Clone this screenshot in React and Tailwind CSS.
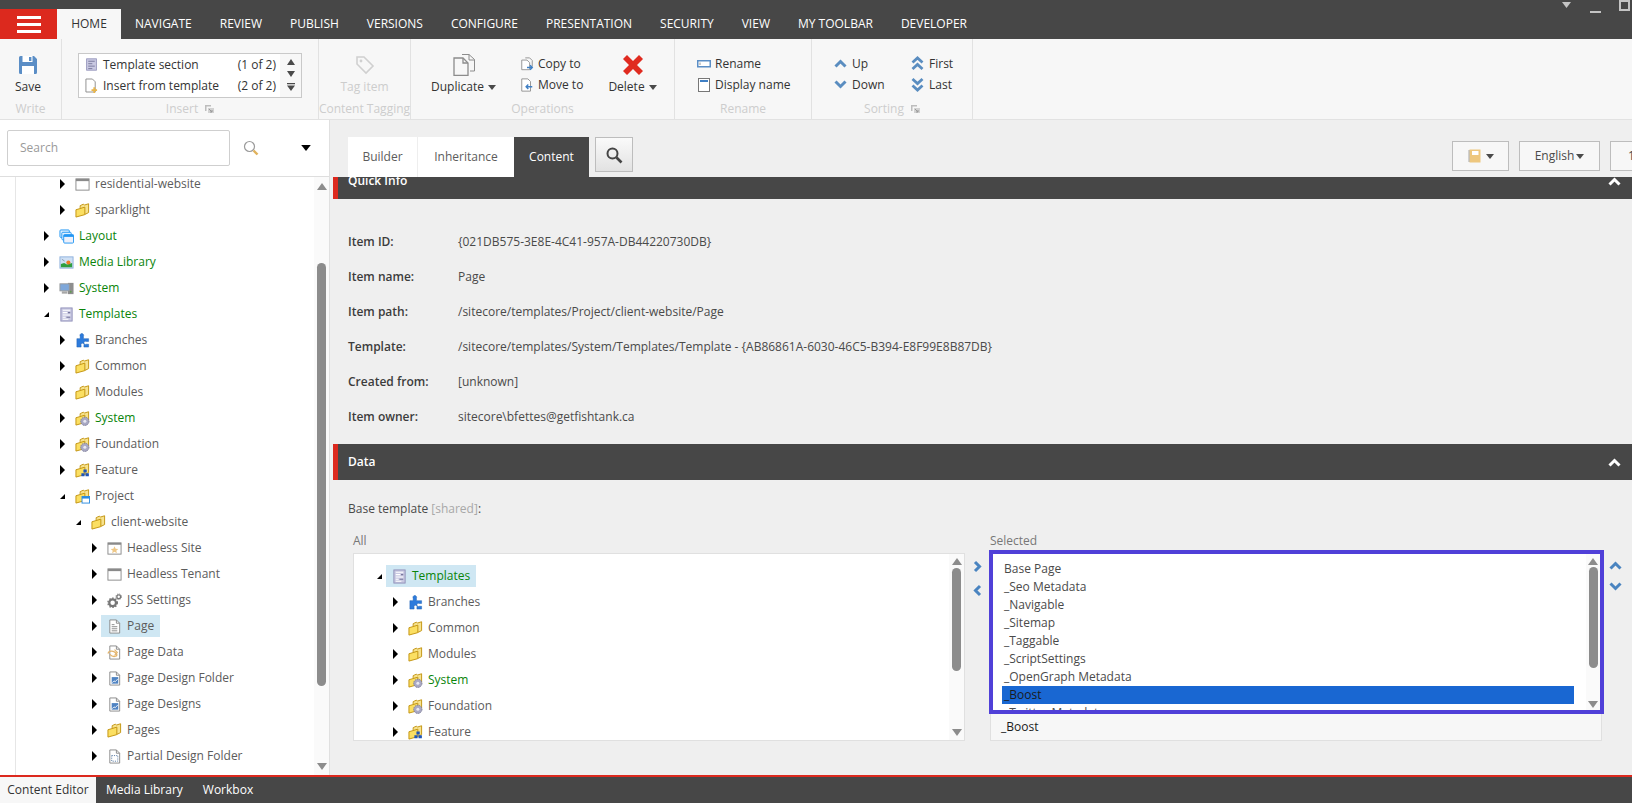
import React from 'react';

const tabs = ['NAVIGATE', 'REVIEW', 'PUBLISH', 'VERSIONS', 'CONFIGURE', 'PRESENTATION', 'SECURITY', 'VIEW', 'MY TOOLBAR', 'DEVELOPER'];

const Caret = ({ className = '' }) => (
  <svg viewBox="0 0 8 5" className={`w-[8px] h-[5px] shrink-0 ${className}`}>
    <polygon points="0,0 8,0 4,5" fill="currentColor" />
  </svg>
);

const ChevronUp = ({ className = '' }) => (
  <svg viewBox="0 0 13 9" className={`w-[13px] h-[9px] shrink-0 ${className}`}>
    <polyline points="1.5,7.5 6.5,2.5 11.5,7.5" fill="none" stroke="currentColor" strokeWidth="3" />
  </svg>
);

const ChevronDown = ({ className = '' }) => (
  <svg viewBox="0 0 13 9" className={`w-[13px] h-[9px] shrink-0 ${className}`}>
    <polyline points="1.5,1.5 6.5,6.5 11.5,1.5" fill="none" stroke="currentColor" strokeWidth="3" />
  </svg>
);

const DoubleUp = () => (
  <svg viewBox="0 0 13 15" className="w-[13px] h-[15px] shrink-0 text-[#5a8dc0]">
    <polyline points="1.5,6.5 6.5,2 11.5,6.5" fill="none" stroke="currentColor" strokeWidth="2.8" />
    <polyline points="1.5,13 6.5,8.5 11.5,13" fill="none" stroke="currentColor" strokeWidth="2.8" />
  </svg>
);

const DoubleDown = () => (
  <svg viewBox="0 0 13 15" className="w-[13px] h-[15px] shrink-0 text-[#5a8dc0]">
    <polyline points="1.5,2 6.5,6.5 11.5,2" fill="none" stroke="currentColor" strokeWidth="2.8" />
    <polyline points="1.5,8.5 6.5,13 11.5,8.5" fill="none" stroke="currentColor" strokeWidth="2.8" />
  </svg>
);

const Launcher = () => (
  <svg viewBox="0 0 9 8" className="w-[9px] h-[8px] shrink-0">
    <path d="M0 0h6v1.5H1.5V6H0z" fill="#bdbdbd" />
    <path d="M3 3h6v5H3z" fill="#d2d2d2" />
    <path d="M4 4l3 3M7 5v2H5" stroke="#999" fill="none" />
  </svg>
);

const Svg16 = ({ children, className = 'w-[15px] h-[15px]' }) => (
  <svg viewBox="0 0 16 16" className={`shrink-0 ${className}`}>{children}</svg>
);

const FolderBase = () => (
  <>
    <path d="M5.5 5V2.8L9 1.2l1 1 4.5-1.4v9.4L11 12z" fill="#f7e28d" stroke="#c2930f" />
    <path d="M1 7.2l9.5-2.8v8L1 15z" fill="#fbdf62" stroke="#c2930f" />
  </>
);

const Folder = () => <Svg16><FolderBase /></Svg16>;

const GearFolder = () => (
  <Svg16>
    <FolderBase />
    <circle cx="10.5" cy="11" r="4.4" fill="#a9a9c4" stroke="#7d7d99" strokeDasharray="1.6 0.8" />
    <circle cx="10.5" cy="11" r="1.6" fill="#e8e8f2" />
  </Svg16>
);

const BlockFolder = () => (
  <Svg16>
    <FolderBase />
    <path d="M9 7h3.5v3H9zM6.8 10.8h3.4v3.4H6.8zM11.2 10.8h3.6v3.4h-3.6z" fill="#1f55b8" />
  </Svg16>
);

const WindowFolder = () => (
  <Svg16>
    <FolderBase />
    <rect x="7.5" y="8" width="8" height="7" fill="#fff" stroke="#2a8be0" />
    <rect x="7.5" y="8" width="8" height="2.2" fill="#2a8be0" />
  </Svg16>
);

const WindowIcon = () => (
  <Svg16>
    <rect x="1" y="2" width="14" height="12" fill="#fff" stroke="#8a8a8a" />
    <rect x="1" y="2" width="14" height="2.4" fill="#8a8a8a" />
  </Svg16>
);

const SiteIcon = () => (
  <Svg16>
    <rect x="1" y="2" width="14" height="12" fill="#fff" stroke="#8a8a8a" />
    <rect x="1" y="2" width="14" height="2" fill="#8a8a8a" />
    <polygon points="8,5.5 9.2,8.2 12,8.5 9.9,10.3 10.6,13 8,11.5 5.4,13 6.1,10.3 4,8.5 6.8,8.2" fill="#eec786" />
  </Svg16>
);

const LayoutIcon = () => (
  <Svg16>
    <rect x="1" y="1" width="10" height="8" rx="1" fill="#dff0ff" stroke="#2196f3" />
    <rect x="3" y="3.5" width="10" height="8" rx="1" fill="#dff0ff" stroke="#2196f3" />
    <rect x="5" y="6" width="10.5" height="9" rx="1" fill="#eef1fb" stroke="#2196f3" />
    <rect x="5" y="6" width="10.5" height="2.4" fill="#2196f3" />
  </Svg16>
);

const MediaIcon = () => (
  <Svg16>
    <rect x="1" y="2" width="14" height="12" fill="#cfe0f5" stroke="#8db0dc" />
    <path d="M2 13V9.5l3.5-1 3 1.5L14 8.5V13z" fill="#2f9e3f" />
    <circle cx="10" cy="8" r="2.2" fill="#ee7a24" />
    <path d="M3 4.5l3 2" stroke="#8a9bb0" />
  </Svg16>
);

const SystemIcon = () => (
  <Svg16>
    <rect x="9.5" y="2" width="6" height="12" fill="#8e8e8e" />
    <rect x="1" y="3" width="10" height="7.5" fill="#7ea7da" stroke="#9a9a9a" />
    <rect x="3" y="11" width="6" height="2.5" fill="#a7a7a7" />
    <circle cx="12.5" cy="11.5" r="1" fill="#5f9e4e" />
  </Svg16>
);

const TemplateIcon = () => (
  <Svg16>
    <rect x="2" y="1" width="12" height="14" fill="#c9c9e2" stroke="#8f8fb8" />
    <path d="M4 3.5h8M4 6h5M4 8.5h8M4 11h3M4 13h6" stroke="#fff" strokeWidth="1.1" />
    <path d="M9.5 6h2.5M8 11h4" stroke="#77779c" strokeWidth="1.1" />
  </Svg16>
);

const PuzzleIcon = () => (
  <Svg16>
    <path d="M5.5 6V3.5a2 2 0 1 1 3.5 0V6h2a2 2 0 0 1 0 0h3.5v3H12a1.7 1.7 0 1 0 0 3h2.5v3H9.5v-2a1.6 1.6 0 1 0-3 0v2H2V6z" fill="#2d7bdc" stroke="#1c5eb0" strokeWidth="0.5" />
  </Svg16>
);

const GearsIcon = () => (
  <Svg16>
    <circle cx="6" cy="10.5" r="3.6" fill="none" stroke="#777" strokeWidth="2.4" />
    <circle cx="6" cy="10.5" r="5" fill="none" stroke="#777" strokeWidth="1.5" strokeDasharray="1.6 1.6" />
    <circle cx="12.5" cy="4" r="2" fill="none" stroke="#777" strokeWidth="1.4" />
    <circle cx="12.5" cy="4" r="3" fill="none" stroke="#777" strokeWidth="1" strokeDasharray="1.2 1.2" />
  </Svg16>
);

const Doc = ({ children }) => (
  <Svg16>
    <path d="M3 1h7l3.5 3.5V15H3z" fill="#fff" stroke="#8a8a8a" />
    <path d="M10 1v3.5h3.5" fill="none" stroke="#8a8a8a" />
    {children}
  </Svg16>
);

const PageIcon = () => (
  <Doc>
    <path d="M5 6h3M5 8.2h6M5 10.4h6M5 12.6h6" stroke="#8a8a8a" />
  </Doc>
);

const PageDataIcon = () => (
  <Doc>
    <path d="M1 9c1-3 5-3 7-1.5S12 11 9 12 4 11 3 10" fill="none" stroke="#e3b46c" strokeWidth="1.4" />
    <path d="M8 5l3 3-3 3" fill="none" stroke="#e3b46c" strokeWidth="1.2" />
  </Doc>
);

const DesignIcon = () => (
  <Doc>
    <rect x="5" y="6.5" width="7" height="7" fill="#4f83c2" />
    <path d="M5.5 12.5l2-2 1.2 1 2.8-3" fill="none" stroke="#fff" strokeWidth="0.9" />
  </Doc>
);

const PartialIcon = () => (
  <Doc>
    <rect x="5" y="7" width="6.5" height="6" fill="none" stroke="#5d7fa8" strokeDasharray="1.2 1.2" />
  </Doc>
);

const icons = {
  folder: Folder, gear: GearFolder, block: BlockFolder, win: WindowFolder, window: WindowIcon,
  site: SiteIcon, layout: LayoutIcon, media: MediaIcon, system: SystemIcon, template: TemplateIcon,
  puzzle: PuzzleIcon, gears: GearsIcon, page: PageIcon, pageData: PageDataIcon, design: DesignIcon, partial: PartialIcon,
};

const Arrow = ({ open }) => (
  <svg viewBox="0 0 7 10" className="w-[7px] h-[10px] shrink-0">
    {open ? <polygon points="6,3 6,8 1,8" fill="#000" /> : <polygon points="1,0 6,5 1,10" fill="#000" />}
  </svg>
);

const indents = ['pl-[43px]', 'pl-[59px]', 'pl-[75px]', 'pl-[91px]'];

const TreeRow = ({ level, icon, label, green, selected, open, indentClass }) => {
  const Icon = icons[icon];
  return (
    <div className={`h-[26px] flex items-center shrink-0 ${indentClass || indents[level]}`}>
      <div className="w-[16px] flex items-center shrink-0"><Arrow open={open} /></div>
      <div className={`flex items-center h-[22px] -ml-[6px] pl-[6px] pr-[6px] ${selected ? 'bg-[#cfe7f3]' : ''}`}>
        <div className="w-[20px] flex items-center shrink-0"><Icon /></div>
        <span className={`whitespace-nowrap ${green ? 'text-[#0a840a]' : 'text-[#5c5c5c]'}`}>{label}</span>
      </div>
    </div>
  );
};

const sideTree = [
  { level: 1, icon: 'window', label: 'residential-website' },
  { level: 1, icon: 'folder', label: 'sparklight' },
  { level: 0, icon: 'layout', label: 'Layout', green: true },
  { level: 0, icon: 'media', label: 'Media Library', green: true },
  { level: 0, icon: 'system', label: 'System', green: true },
  { level: 0, icon: 'template', label: 'Templates', green: true, open: true },
  { level: 1, icon: 'puzzle', label: 'Branches' },
  { level: 1, icon: 'folder', label: 'Common' },
  { level: 1, icon: 'folder', label: 'Modules' },
  { level: 1, icon: 'gear', label: 'System', green: true },
  { level: 1, icon: 'gear', label: 'Foundation' },
  { level: 1, icon: 'block', label: 'Feature' },
  { level: 1, icon: 'win', label: 'Project', open: true },
  { level: 2, icon: 'folder', label: 'client-website', open: true },
  { level: 3, icon: 'site', label: 'Headless Site' },
  { level: 3, icon: 'window', label: 'Headless Tenant' },
  { level: 3, icon: 'gears', label: 'JSS Settings' },
  { level: 3, icon: 'page', label: 'Page', selected: true },
  { level: 3, icon: 'pageData', label: 'Page Data' },
  { level: 3, icon: 'design', label: 'Page Design Folder' },
  { level: 3, icon: 'design', label: 'Page Designs' },
  { level: 3, icon: 'folder', label: 'Pages' },
  { level: 3, icon: 'partial', label: 'Partial Design Folder' },
  { level: 3, icon: 'design', label: '' },
];

const allTree = [
  { icon: 'template', label: 'Templates', green: true, open: true, selected: true, indentClass: 'pl-[22px]' },
  { icon: 'puzzle', label: 'Branches', indentClass: 'pl-[38px]' },
  { icon: 'folder', label: 'Common', indentClass: 'pl-[38px]' },
  { icon: 'folder', label: 'Modules', indentClass: 'pl-[38px]' },
  { icon: 'gear', label: 'System', green: true, indentClass: 'pl-[38px]' },
  { icon: 'gear', label: 'Foundation', indentClass: 'pl-[38px]' },
  { icon: 'block', label: 'Feature', indentClass: 'pl-[38px]' },
];

const selectedItems = ['Base Page', '_Seo Metadata', '_Navigable', '_Sitemap', '_Taggable', '_ScriptSettings', '_OpenGraph Metadata', '_Boost', '_Twitter Metadata'];

const infoRows = [
  ['Item ID:', '{021DB575-3E8E-4C41-957A-DB44220730DB}'],
  ['Item name:', 'Page'],
  ['Item path:', '/sitecore/templates/Project/client-website/Page'],
  ['Template:', '/sitecore/templates/System/Templates/Template - {AB86861A-6030-46C5-B394-E8F99E8B87DB}'],
  ['Created from:', '[unknown]'],
  ['Item owner:', 'sitecore\\bfettes@getfishtank.ca'],
];

const ScrollArrow = ({ down }) => (
  <svg viewBox="0 0 10 7" className="w-[10px] h-[7px] shrink-0">
    <polygon points={down ? '0,0 10,0 5,7' : '0,7 10,7 5,0'} fill="#8c8c8c" />
  </svg>
);

const Scrollbar = ({ width, top, arrowTop, thumb, bottom }) => (
  <div className={`${width} h-full bg-[#fafafa] flex flex-col items-center shrink-0`}>
    <div className={arrowTop}><ScrollArrow /></div>
    <div className={`${top} ${thumb} w-[9px] rounded-full bg-[#8c8c8c]`} />
    <div className={`mt-auto ${bottom}`}><ScrollArrow down /></div>
  </div>
);

const SectionBar = ({ title, clipped }) => (
  <div className={`flex flex-col justify-end overflow-hidden shrink-0 ${clipped ? 'h-[22px]' : 'h-[36px]'}`}>
    <div className="h-[36px] shrink-0 bg-[#474747] border-l-[5px] border-[#dc291e] flex items-center pl-[10px] pr-[11px] text-white font-semibold">
      <span>{title}</span>
      <ChevronUp className="ml-auto text-white" />
    </div>
  </div>
);

const RibbonGroup = ({ label, width, launcher, children }) => (
  <div className={`${width} h-full border-r border-[#e2e2e2] flex flex-col shrink-0`}>
    <div className="h-[61px] flex">{children}</div>
    <div className="h-[18px] flex items-center justify-center gap-[7px] text-[#cdcdcd] whitespace-nowrap">
      <span>{label}</span>
      {launcher && <Launcher />}
    </div>
  </div>
);

const SmallButton = ({ icon, label, gap = 'gap-[4px]' }) => (
  <div className={`h-[21px] flex items-center text-[#333] whitespace-nowrap ${gap}`}>
    {icon}
    <span>{label}</span>
  </div>
);

const SaveIcon = () => (
  <svg viewBox="0 0 18 18" className="w-[18px] h-[18px]">
    <path d="M0 1.5A1.5 1.5 0 0 1 1.5 0H15l3 3v13.5a1.5 1.5 0 0 1-1.5 1.5h-15A1.5 1.5 0 0 1 0 16.5z" fill="#5b8ec6" />
    <rect x="3.5" y="0" width="10" height="6" fill="#fff" />
    <rect x="10" y="1" width="2.4" height="4" fill="#5b8ec6" />
    <rect x="3" y="10" width="12" height="8" fill="#fff" />
  </svg>
);

const TagIcon = () => (
  <svg viewBox="0 0 20 20" className="w-[20px] h-[20px]">
    <path d="M2 2h7l9 9-7 7-9-9z" fill="none" stroke="#d0d0d0" strokeWidth="1.6" />
    <circle cx="6" cy="6" r="1.4" fill="#d0d0d0" />
  </svg>
);

const DuplicateIcon = () => (
  <svg viewBox="0 0 22 22" className="w-[22px] h-[22px]">
    <path d="M9 0.5h7l5.5 5V17H17" fill="#f7f7f7" stroke="#8c8c8c" />
    <path d="M16 0.5V6h5.5" fill="none" stroke="#8c8c8c" />
    <path d="M1 4h9l5 5v12.5H1z" fill="#f7f7f7" stroke="#8c8c8c" strokeWidth="1.3" />
    <path d="M10 4v5h5" fill="none" stroke="#8c8c8c" strokeWidth="1.3" />
  </svg>
);

const CopyIcon = () => (
  <svg viewBox="0 0 16 16" className="w-[14px] h-[16px] shrink-0">
    <path d="M6 1h5l3 3v7" fill="none" stroke="#8c8c8c" />
    <path d="M2 3.5h6l3 3v8H2z" fill="#fff" stroke="#8c8c8c" />
    <path d="M8 12h6M11.5 9.5L14 12l-2.5 2.5" fill="none" stroke="#3f7fc4" strokeWidth="1.6" />
  </svg>
);

const MoveIcon = () => (
  <svg viewBox="0 0 16 16" className="w-[14px] h-[16px] shrink-0">
    <path d="M2 1h7l3 3v11H2z" fill="#fff" stroke="#8c8c8c" />
    <path d="M14 10H7M9.5 7.5L7 10l2.5 2.5" fill="none" stroke="#3f7fc4" strokeWidth="1.6" />
  </svg>
);

const DeleteIcon = () => (
  <svg viewBox="0 0 20 20" className="w-[20px] h-[20px]">
    <polygon points="4,0 10,6 16,0 20,4 14,10 20,16 16,20 10,14 4,20 0,16 6,10 0,4" fill="#e02b20" />
  </svg>
);

const RenameIcon = () => (
  <svg viewBox="0 0 14 8" className="w-[14px] h-[8px] shrink-0">
    <rect x="0.75" y="0.75" width="12.5" height="6" fill="#fff" stroke="#5b8ec6" strokeWidth="1.5" />
    <path d="M3 2.5v2.5" stroke="#999" />
  </svg>
);

const DisplayIcon = () => (
  <svg viewBox="0 0 12 14" className="w-[12px] h-[14px] shrink-0 mx-[1px]">
    <rect x="0.5" y="0.5" width="11" height="13" fill="#fff" stroke="#777" />
    <rect x="2" y="2" width="8" height="2" fill="#3f7fc4" />
  </svg>
);

const SearchGlass = () => (
  <svg viewBox="0 0 16 16" className="w-[16px] h-[16px]">
    <circle cx="6.5" cy="6.5" r="5" fill="#fff" stroke="#9a9a9a" strokeWidth="1.2" />
    <path d="M10.5 10.5l4 4" stroke="#e0b25c" strokeWidth="2.4" />
  </svg>
);

const GalleryRow = ({ icon, label, count }) => (
  <div className="h-[21px] flex items-center pl-[6px] pr-[4px] text-[#333]">
    <div className="w-[18px] shrink-0 flex">{icon}</div>
    <span className="whitespace-nowrap">{label}</span>
    <span className="ml-auto">{count}</span>
  </div>
);

const InsertDocIcon = () => (
  <svg viewBox="0 0 14 16" className="w-[13px] h-[15px]">
    <path d="M1 1h7l3 3v11H1z" fill="#fff" stroke="#8a8a8a" />
    <path d="M7 13h6M10 10v6" stroke="#e8b54a" strokeWidth="2" />
  </svg>
);

const Ribbon = () => (
  <div className="h-[81px] bg-[#f7f7f7] border-b border-[#e2e2e2] flex shrink-0">
    <RibbonGroup label="Write" width="w-[62px]">
      <div className="w-[56px] flex flex-col items-center pt-[17px]">
        <SaveIcon />
        <span className="mt-[5px] text-[#333]">Save</span>
      </div>
    </RibbonGroup>
    <RibbonGroup label="Insert" width="w-[257px]" launcher>
      <div className="ml-[16px] mt-[14px] w-[224px] h-[45px] border border-[#c9c9c9] flex">
        <div className="w-[201px] bg-white">
          <GalleryRow icon={<Svg16 className="w-[13px] h-[15px]"><rect x="2" y="1" width="12" height="14" fill="#c9c9e2" stroke="#8f8fb8" /><path d="M4 4h8M4 7h5M4 10h8M4 13h5" stroke="#6d6d92" /></Svg16>} label="Template section" count="(1 of 2)" />
          <GalleryRow icon={<InsertDocIcon />} label="Insert from template" count="(2 of 2)" />
        </div>
        <div className="flex-1 flex flex-col items-center pt-[5px] gap-[6px] text-[#4a4a4a]">
          <svg viewBox="0 0 8 6" className="w-[8px] h-[6px]"><polygon points="0,6 8,6 4,0" fill="currentColor" /></svg>
          <svg viewBox="0 0 8 6" className="w-[8px] h-[6px]"><polygon points="0,0 8,0 4,6" fill="currentColor" /></svg>
          <svg viewBox="0 0 8 8" className="w-[8px] h-[8px]"><path d="M0 0h8v1.2H0zM0 2.5h8L4 8z" fill="currentColor" /></svg>
        </div>
      </div>
    </RibbonGroup>
    <RibbonGroup label="Content Tagging" width="w-[92px]">
      <div className="w-full flex flex-col items-center pt-[16px]">
        <TagIcon />
        <span className="mt-[4px] text-[#cdcdcd]">Tag item</span>
      </div>
    </RibbonGroup>
    <RibbonGroup label="Operations" width="w-[264px]">
      <div className="ml-[21px] w-[63px] flex flex-col items-center pt-[15px]">
        <DuplicateIcon />
        <div className="mt-[3px] flex items-center gap-[4px] text-[#333]">
          <span>Duplicate</span>
          <Caret className="text-[#4a4a4a]" />
        </div>
      </div>
      <div className="ml-[25px] pt-[14px] w-[64px]">
        <SmallButton icon={<CopyIcon />} label="Copy to" />
        <SmallButton icon={<MoveIcon />} label="Move to" />
      </div>
      <div className="ml-[25px] w-[47px] flex flex-col items-center pt-[16px]">
        <DeleteIcon />
        <div className="mt-[4px] flex items-center gap-[4px] text-[#333]">
          <span>Delete</span>
          <Caret className="text-[#4a4a4a]" />
        </div>
      </div>
    </RibbonGroup>
    <RibbonGroup label="Rename" width="w-[137px]">
      <div className="pl-[22px] pt-[14px]">
        <SmallButton icon={<RenameIcon />} label="Rename" />
        <SmallButton icon={<DisplayIcon />} label="Display name" />
      </div>
    </RibbonGroup>
    <RibbonGroup label="Sorting" width="w-[161px]" launcher>
      <div className="pl-[22px] pt-[14px] w-[99px]">
        <SmallButton icon={<ChevronUp className="text-[#5a8dc0]" />} label="Up" gap="gap-[5px]" />
        <SmallButton icon={<ChevronDown className="text-[#5a8dc0]" />} label="Down" gap="gap-[5px]" />
      </div>
      <div className="pt-[14px]">
        <SmallButton icon={<DoubleUp />} label="First" gap="gap-[5px]" />
        <SmallButton icon={<DoubleDown />} label="Last" gap="gap-[5px]" />
      </div>
    </RibbonGroup>
  </div>
);

const TopBar = () => (
  <div className="h-[39px] bg-[#474747] flex shrink-0 pt-[9px]">
    <div className="w-[57px] bg-[#dc291e] flex flex-col items-center justify-center gap-[4px]">
      <div className="w-[24px] h-[3px] bg-white" />
      <div className="w-[24px] h-[3px] bg-white" />
      <div className="w-[24px] h-[3px] bg-white" />
    </div>
    <div className="w-[64px] bg-[#f7f7f7] text-[#333] flex items-center justify-center">HOME</div>
    {tabs.map((tab) => (
      <div key={tab} className="px-[14px] flex items-center text-white whitespace-nowrap">{tab}</div>
    ))}
    <div className="ml-auto -mt-[9px] flex items-start pr-[2px]">
      <svg viewBox="0 0 9 6" className="w-[9px] h-[6px] mt-[2px] text-[#c4c4c4]"><polygon points="0,0 9,0 4.5,6" fill="currentColor" /></svg>
      <div className="ml-[19px] mt-[11px] w-[11px] h-[2px] bg-[#c4c4c4]" />
      <div className="ml-[18px] w-[11px] h-[11px] border-2 border-[#c4c4c4]" />
    </div>
  </div>
);

const Sidebar = () => (
  <div className="w-[330px] h-full bg-white border-r border-[#e0e0e0] flex flex-col shrink-0 overflow-hidden">
    <div className="h-[57px] border-b border-[#dedede] flex items-center pl-[7px] shrink-0">
      <div className="w-[223px] h-[36px] border border-[#cfcfcf] rounded-[2px] flex items-center pl-[12px] text-[#9a9a9a]">Search</div>
      <div className="ml-[13px]"><SearchGlass /></div>
      <Caret className="ml-[42px] text-black !w-[10px] !h-[6px]" />
    </div>
    <div className="flex-1 ml-[15px] border-l border-[#e6e6e6] flex min-h-0">
      <div className="flex-1 -mt-[6px] -ml-[16px] overflow-hidden">
        {sideTree.map((row, i) => <TreeRow key={i} {...row} />)}
      </div>
      <Scrollbar width="w-[15px]" arrowTop="mt-[6px]" top="mt-[73px]" thumb="h-[423px]" bottom="mb-[5px]" />
    </div>
  </div>
);

const Toolbar = () => (
  <div className="h-[57px] flex shrink-0 pt-[17px] pl-[18px]">
    <div className="w-[70px] h-[40px] shrink-0 bg-white border-r border-[#eeeeee] flex items-center justify-center text-[#5c5c5c]">Builder</div>
    <div className="w-[96px] h-[40px] shrink-0 bg-white flex items-center justify-center text-[#5c5c5c]">Inheritance</div>
    <div className="w-[75px] h-[40px] shrink-0 bg-[#474747] flex items-center justify-center text-white">Content</div>
    <div className="ml-[6px] w-[38px] h-[35px] shrink-0 border border-[#bdbdbd] bg-gradient-to-b from-[#fafafa] to-[#e2e2e2] flex items-center justify-center">
      <svg viewBox="0 0 18 18" className="w-[18px] h-[18px]">
        <circle cx="7.5" cy="7.5" r="5" fill="none" stroke="#444" strokeWidth="2" />
        <path d="M11.5 11.5l5 5" stroke="#444" strokeWidth="2.6" />
      </svg>
    </div>
    <div className="ml-[819px] mt-[4px] w-[57px] h-[30px] border border-[#bdbdbd] bg-[#f7f7f7] flex items-center justify-center gap-[5px] shrink-0">
      <svg viewBox="0 0 13 14" className="w-[13px] h-[14px]">
        <rect x="1.5" y="0.5" width="11" height="13" fill="#eec77e" />
        <rect x="4" y="2" width="6.5" height="4" fill="#fff" />
        <path d="M0 2h2M0 4h2M0 6h2M0 8h2M0 10h2M0 12h2" stroke="#888" strokeWidth="0.7" />
      </svg>
      <Caret className="text-[#4a4a4a]" />
    </div>
    <div className="ml-[10px] mt-[4px] w-[81px] h-[30px] border border-[#bdbdbd] bg-[#f7f7f7] flex items-center justify-center gap-[2px] text-[#4a4a4a] shrink-0">
      <span>English</span>
      <Caret className="text-[#4a4a4a]" />
    </div>
    <div className="ml-[10px] mt-[4px] w-[60px] h-[30px] border border-[#bdbdbd] bg-[#f7f7f7] flex items-center pl-[17px] text-[#4a4a4a] shrink-0">1</div>
  </div>
);

const DataSection = () => (
  <div className="flex flex-col">
    <div className="mt-[20px] h-[18px] pl-[15px] leading-[18px] text-[#4a4a4a]">
      Base template <span className="text-[#a8a8a8]">[shared]</span>:
    </div>
    <div className="mt-[15px] pl-[20px] flex items-start">
      <div className="w-[612px] shrink-0">
        <div className="h-[20px] leading-[15px] text-[#777]">All</div>
        <div className="h-[188px] border border-[#e0e0e0] bg-white flex overflow-hidden">
          <div className="flex-1 pt-[9px]">
            {allTree.map((row, i) => <TreeRow key={i} {...row} />)}
          </div>
          <Scrollbar width="w-[15px]" arrowTop="mt-[4px]" top="mt-[3px]" thumb="h-[103px]" bottom="mb-[4px]" />
        </div>
      </div>
      <div className="w-[24px] shrink-0 flex flex-col items-center pt-[27px] gap-[11px] text-[#4a84c0]">
        <svg viewBox="0 0 9 13" className="w-[9px] h-[13px]"><polyline points="2,2 6.5,6.5 2,11" fill="none" stroke="currentColor" strokeWidth="3" /></svg>
        <svg viewBox="0 0 9 13" className="w-[9px] h-[13px]"><polyline points="7,2 2.5,6.5 7,11" fill="none" stroke="currentColor" strokeWidth="3" /></svg>
      </div>
      <div className="w-[615px] shrink-0">
        <div className="h-[17px] pl-[1px] leading-[16px] text-[#777]">Selected</div>
        <div className="h-[164px] border-4 border-[#5040d8] bg-white flex overflow-hidden">
          <div className="flex-1 pl-[9px] pr-[12px] pt-[6px] overflow-hidden">
            {selectedItems.map((item) => (
              <div key={item} className={`h-[18px] leading-[18px] pl-[2px] shrink-0 whitespace-nowrap ${item === '_Boost' ? 'bg-[#1967d2] text-[#1b1b1b]' : 'text-[#4a4a4a]'}`}>{item}</div>
            ))}
          </div>
          <Scrollbar width="w-[14px]" arrowTop="mt-[4px]" top="mt-[2px]" thumb="h-[101px]" bottom="mb-[2px]" />
        </div>
        <div className="ml-[1px] w-[612px] h-[27px] bg-[#f7f7f7] border border-t-0 border-[#e0e0e0] flex items-center pl-[10px] text-[#1b1b1b]">_Boost</div>
      </div>
      <div className="ml-[5px] flex flex-col items-center pt-[28px] gap-[12px] text-[#4a84c0]">
        <ChevronUp />
        <ChevronDown />
      </div>
    </div>
  </div>
);

const MainPanel = () => (
  <div className="flex-1 min-w-0 h-full bg-[#efefef] flex flex-col overflow-hidden">
    <Toolbar />
    <div className="pl-[3px] flex flex-col">
      <SectionBar title="Quick Info" clipped />
      <div className="pl-[15px] pt-[25px] pb-[10px]">
        {infoRows.map(([label, value]) => (
          <div key={label} className="h-[35px] flex items-center">
            <div className="w-[110px] font-semibold text-[#3c3c3c]">{label}</div>
            <div className="text-[#4a4a4a] whitespace-nowrap">{value}</div>
          </div>
        ))}
      </div>
      <SectionBar title="Data" />
      <DataSection />
    </div>
  </div>
);

const BottomBar = () => (
  <div className="h-[28px] bg-[#474747] border-t-[2px] border-[#dc291e] flex shrink-0 text-white">
    <div className="w-[96px] bg-[#f7f7f7] text-[#333] flex items-center justify-center">Content Editor</div>
    <div className="ml-[10px] flex items-center">Media Library</div>
    <div className="ml-[20px] flex items-center">Workbox</div>
  </div>
);

const App = () => (
  <div className="w-[1632px] h-[803px] overflow-hidden flex flex-col bg-white text-[12px] leading-[16px] font-['Open_Sans',sans-serif]">
    <TopBar />
    <Ribbon />
    <div className="h-[655px] flex shrink-0">
      <Sidebar />
      <MainPanel />
    </div>
    <BottomBar />
  </div>
);

export default App;
